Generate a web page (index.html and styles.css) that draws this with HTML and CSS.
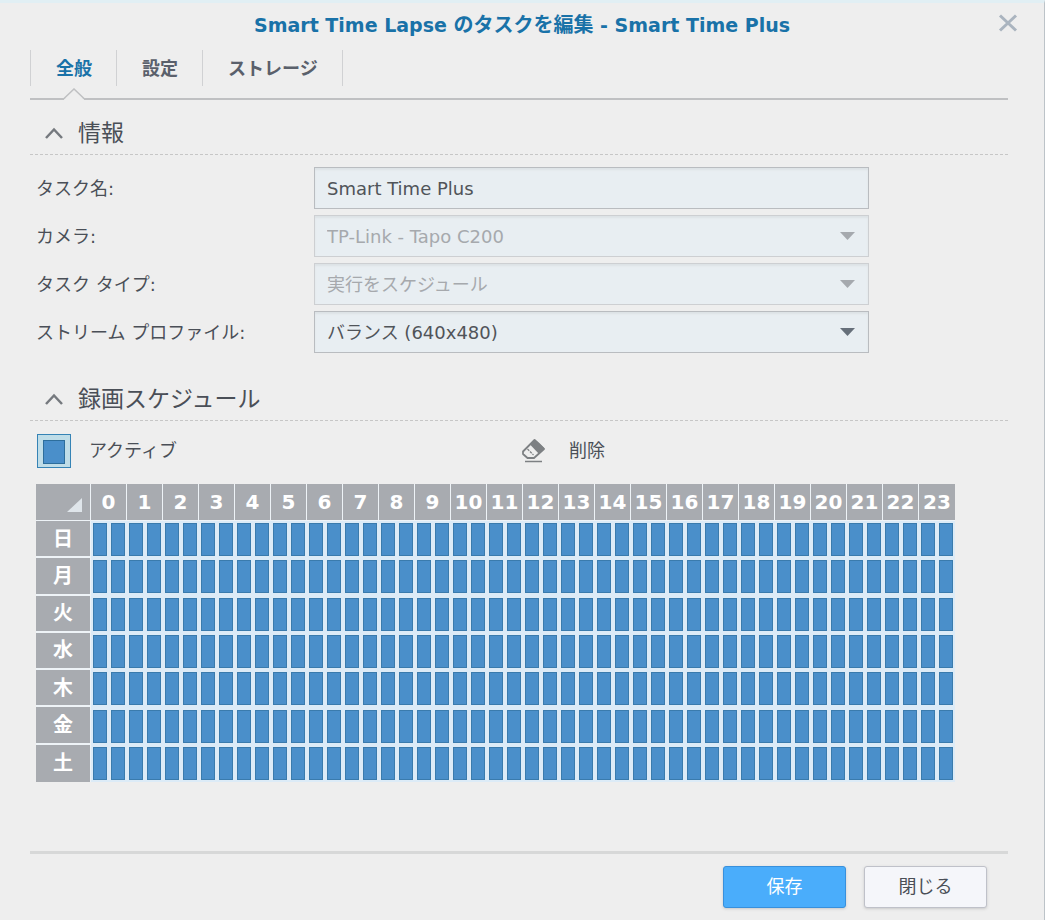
FILE: index.html
```html
<!DOCTYPE html>
<html lang="ja">
<head>
<meta charset="utf-8">
<meta name="viewport" content="width=device-width, initial-scale=1">
<title>Smart Time Lapse のタスクを編集</title>
<link rel="stylesheet" href="styles.css">
</head>
<body>
<main class="dialog">
  <header class="dialog-header">
    <h1 class="dialog-title">Smart Time Lapse <span class="title-action">のタスクを編集</span> - Smart Time Plus</h1>
    <button class="close" type="button" aria-label="閉じる">
      <svg width="20" height="18" viewBox="0 0 20 18"><path d="M2 1.500 18 16.500M18 1.500 2 16.500" fill="none" stroke="#aab4bf" stroke-width="3"/></svg>
    </button>
  </header>
  <div class="dialog-body">
    <nav class="tabs">
      <button class="tab tab-active" type="button">全般
        <svg class="tab-pointer" width="22" height="12" viewBox="0 0 22 12"><path d="M1 11.5 11 1.5 21 11.5V12H1Z" fill="#eee"/><path d="M1 10.5 11 1 21 10.5" fill="none" stroke="#bfc0c2" stroke-width="1.5"/></svg>
      </button>
      <button class="tab" type="button">設定</button>
      <button class="tab" type="button">ストレージ</button>
    </nav>

    <section class="section">
      <h2 class="section-title">
        <svg class="chevron" width="20" height="14" viewBox="0 0 20 14"><path d="M2 12 10 3.500 18 12" fill="none" stroke="#75797e" stroke-width="2.500"/></svg>
        情報
      </h2>
      <div class="fields">
        <label for="task-name">タスク名:</label>
        <input class="field" id="task-name" type="text" value="Smart Time Plus">
        <label for="camera">カメラ:</label>
        <select class="field" id="camera" disabled><option>TP-Link - Tapo C200</option></select>
        <label for="task-type">タスク タイプ:</label>
        <select class="field" id="task-type" disabled><option>実行をスケジュール</option></select>
        <label for="profile">ストリーム プロファイル:</label>
        <select class="field" id="profile"><option>バランス (640x480)</option></select>
      </div>
    </section>

    <section class="section">
      <h2 class="section-title">
        <svg class="chevron" width="20" height="14" viewBox="0 0 20 14"><path d="M2 12 10 3.500 18 12" fill="none" stroke="#75797e" stroke-width="2.500"/></svg>
        録画スケジュール
      </h2>
      <div class="tools">
        <button class="tool" type="button"><span class="swatch"></span>アクティブ</button>
        <button class="tool" type="button">
          <svg class="eraser" width="26" height="26" viewBox="0 0 26 26">
            <path d="M2 13.500 13.500 2 18 6 23 11 13 20H6.500L2 16Z" fill="#eee" stroke="#7d8083" stroke-width="1.800" stroke-linejoin="round"/>
            <path d="M9 6.500 14 1.500 23.500 10.500 18 16Z" fill="#7d8083"/>
            <path d="M6.500 11 12.500 17" stroke="#7d8083" stroke-width="1.200" stroke-dasharray="2.500 1"/>
            <path d="M4 23.500H21" stroke="#7d8083" stroke-width="1.500"/>
          </svg>削除</button>
      </div>
      <table class="schedule">
        <thead><tr id="hours"><th class="corner" aria-label="すべて"><svg width="15" height="14" viewBox="0 0 15 14"><path d="M15 0V14H0Z" fill="#dfe5ea"/></svg></th></tr></thead>
        <tbody id="days"></tbody>
      </table>
    </section>
  </div>
  <footer class="dialog-footer">
    <button class="button button-primary" type="button">保存</button>
    <button class="button" type="button">閉じる</button>
  </footer>
</main>
<script src="schedule.js"></script>
</body>
</html>
```

FILE: styles.css
```css
* { box-sizing: border-box; }

body {
  margin: 0;
  background: #eee;
  color: #4a4f57;
  font: 18px/26px "DejaVu Sans", "Noto Sans CJK JP", sans-serif;
}

button, input, select { font: inherit; color: inherit; }

button { cursor: pointer; }

.dialog {
  display: flex;
  flex-direction: column;
  min-height: 100vh;
  border-top: 3px solid #e1eff4;
  border-right: 1px solid #bcc3c8;
}

.dialog-header {
  display: grid;
  grid-template-columns: 72px 1fr 72px;
  align-items: center;
  height: 44px;
}

.dialog-title {
  grid-column: 2;
  margin: 0;
  color: #1972a8;
  font-size: 19px;
  text-align: center;
}

.title-action { font-size: 20px; }

.close {
  display: flex;
  justify-content: center;
  padding: 0 0 4px;
  border: 0;
  background: none;
}

.dialog-body {
  flex: 1;
  padding: 3px 36px 0 30px;
}

.tabs {
  display: flex;
  height: 50px;
  border-bottom: 2px solid #bfc0c2;
}

.tab {
  position: relative;
  height: 36px;
  padding: 2px 24px 0 25px;
  border: 0;
  border-right: 1px solid #d0d1d3;
  background: none;
  color: #5a606b;
  font-weight: bold;
}

.tab:first-child { border-left: 1px solid #d0d1d3; }

.tab-active { color: #1972a8; }

.tab-pointer {
  position: absolute;
  bottom: -14px;
  left: 50%;
  margin-left: -11px;
}

.section-title {
  display: flex;
  align-items: center;
  gap: 14px;
  height: 44px;
  margin: 0 0 12px;
  padding-left: 14px;
  border-bottom: 1px dashed #c6c6c6;
  font-size: 23px;
  font-weight: normal;
}

.section { padding-top: 11px; }

.section + .section { padding-top: 24px; }

.fields {
  display: grid;
  grid-template-columns: 278px minmax(0, 555px);
  gap: 6px 0;
  align-items: center;
  padding-left: 6px;
}

.fields label { padding-top: 2px; }

.field {
  width: 100%;
  height: 42px;
  padding: 0 12px;
  border: 1px solid #b9bcc0;
  border-radius: 0;
  background: #e8eef2;
  box-shadow: inset 0 2px 2px #dde2e5;
  color: #505459;
}

select.field {
  appearance: none;
  padding-top: 2px;
  background: #e8eef2 url("data:image/svg+xml,%3Csvg xmlns='http://www.w3.org/2000/svg' width='15' height='8'%3E%3Cpath d='M0 0h15L7.500 8z' fill='%23666f7a'/%3E%3C/svg%3E") no-repeat right 13px center;
}

select.field:disabled {
  border-color: #cdcfd2;
  background-image: url("data:image/svg+xml,%3Csvg xmlns='http://www.w3.org/2000/svg' width='15' height='8'%3E%3Cpath d='M0 0h15L7.500 8z' fill='%23a5a9ae'/%3E%3C/svg%3E");
  color: #a6a9ad;
  opacity: 1;
}

.tools {
  display: grid;
  grid-template-columns: 484px auto;
  justify-content: start;
  height: 36px;
  margin-bottom: 15px;
  padding-left: 7px;
}

.tool {
  display: flex;
  align-items: center;
  gap: 18px;
  padding: 0;
  border: 0;
  background: none;
}

.eraser { margin-right: 4px; }

.swatch {
  width: 34px;
  height: 34px;
  padding: 5px;
  border: 1px solid #3583b5;
  background: #bfdde8;
}

.swatch::before {
  content: "";
  display: block;
  height: 22px;
  border: 1px solid #2d6e9c;
  background: #4a8fca;
}

.schedule {
  width: 918px;
  height: 298px;
  margin-left: 6px;
  border-spacing: 0;
  table-layout: fixed;
}

.schedule th {
  width: 36px;
  height: 37px;
  padding: 0;
  border: solid #eef3f7;
  border-width: 0 1px 1px 0;
  background: #a8abb0;
  color: #fff;
  font-size: 20px;
  line-height: 24px;
}

.schedule .corner {
  width: 55px;
  padding: 5px 8px 0 0;
  text-align: right;
}

.corner svg { display: inline-block; }

.schedule tr > :last-child { border-right: 0; }

.schedule tbody th {
  border-bottom-width: 2px;
}

.schedule tbody tr:last-child th { border-bottom: 0; }

.schedule td {
  padding: 2px;
  background: #dcebf7;
}

.slot {
  display: block;
  width: 14px;
  height: 33px;
  border: 1px solid #3a7bad;
  background: #4a8fca;
}

.dialog-footer {
  display: flex;
  justify-content: flex-end;
  gap: 18px;
  height: 69px;
  margin: 0 36px 0 30px;
  padding: 12px 21px 0 0;
  border-top: 3px solid #d7d8d8;
}

.button {
  width: 123px;
  height: 42px;
  padding: 0;
  border: 1px solid #bfc1c9;
  border-radius: 3px;
  background: #f5f6fa;
  box-shadow: 0 1px 3px #c8c8c8;
}

.button-primary {
  border-color: #3890dc;
  background: #4aadfb;
  color: #fff;
}
```

FILE: schedule.js
```js
const hours = document.getElementById("hours");
const days = document.getElementById("days");

for (let hour = 0; hour < 24; hour++) {
  const heading = document.createElement("th");
  heading.scope = "col";
  heading.colSpan = 2;
  heading.textContent = hour;
  hours.append(heading);
}

for (const day of "日月火水木金土") {
  const row = document.createElement("tr");
  const heading = document.createElement("th");
  heading.scope = "row";
  heading.textContent = day;
  row.append(heading);
  // Two half-hour slots for each hour
  for (let half = 0; half < 48; half++) {
    const slot = document.createElement("span");
    slot.className = "slot";
    row.insertCell().append(slot);
  }
  days.append(row);
}
```
